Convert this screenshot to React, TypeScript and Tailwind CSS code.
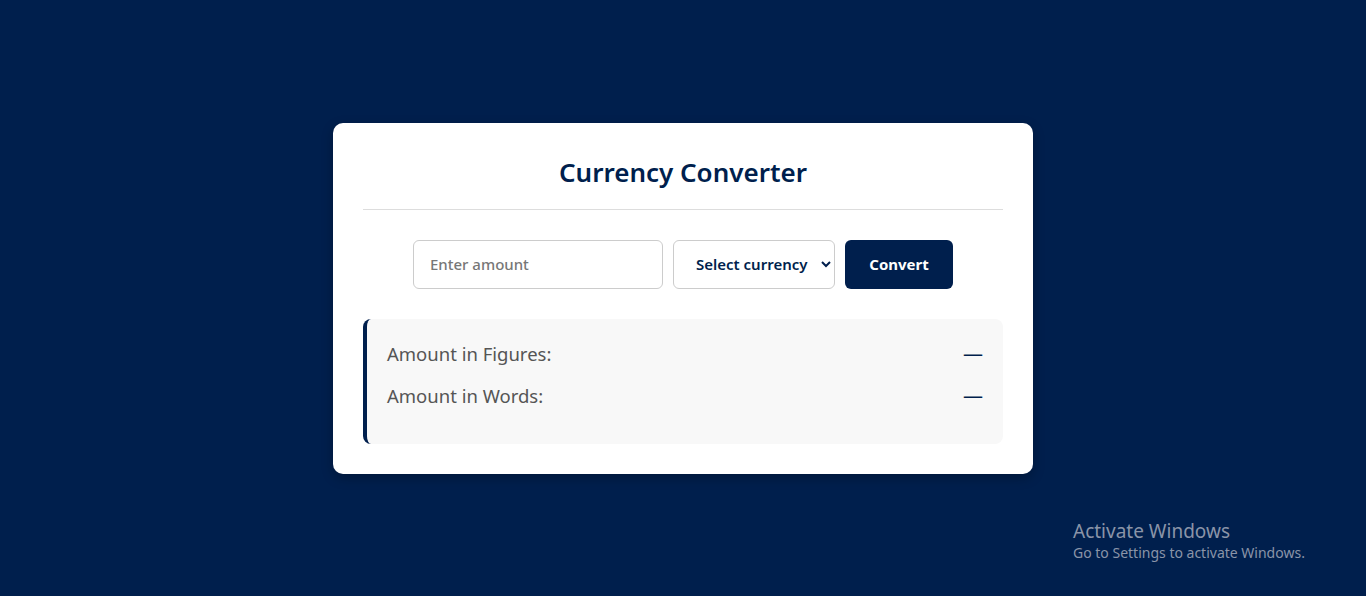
export default function App() {
  return (
    <div className="relative flex min-h-[596px] w-full items-center justify-center bg-[#001f4d] font-['Noto_Sans','Open_Sans',sans-serif]">
      <div className="w-[700px] rounded-[10px] bg-white p-[30px] shadow-[0_4px_12px_rgba(0,0,0,0.25)]">
        <h1 className="border-b border-[#dddddd] pb-[17px] text-center text-[26px] leading-[39px] font-semibold text-[#001f4d]">
          Currency Converter
        </h1>

        <div className="mt-[30px] flex items-center justify-center gap-[10px]">
          <input
            type="text"
            placeholder="Enter amount"
            className="h-[49px] w-[250px] rounded-[6px] border border-[#cccccc] px-[16px] text-[15px] font-medium text-[#001f4d] outline-none placeholder:text-[#777777]"
          />
          <select
            defaultValue=""
            className="h-[49px] w-[162px] rounded-[6px] border border-[#cccccc] bg-white pl-[18px] pr-[4px] text-[15px] font-semibold text-[#001f4d] outline-none"
          >
            <option value="">Select currency</option>
            <option value="USD">USD</option>
            <option value="EUR">EUR</option>
            <option value="GBP">GBP</option>
          </select>
          <button className="h-[49px] w-[108px] rounded-[6px] bg-[#001f4d] text-[15px] font-bold text-white">
            Convert
          </button>
        </div>

        <div className="mt-[30px] rounded-[8px] border-l-4 border-[#001f4d] bg-[#f8f8f8] px-[20px] pt-[21px] pb-[20px]">
          <div className="mb-[14px] flex items-center justify-between text-[18.5px] leading-[28px] text-[#555555]">
            <span>Amount in Figures:</span>
            <span className="text-[20px] text-[#001f4d]">—</span>
          </div>
          <div className="mb-[14px] flex items-center justify-between text-[18.5px] leading-[28px] text-[#555555]">
            <span>Amount in Words:</span>
            <span className="text-[20px] text-[#001f4d]">—</span>
          </div>
        </div>
      </div>

      <div className="absolute top-[518px] left-[1073px] text-[#8a94a8]">
        <div className="text-[19px] leading-[26px]">Activate Windows</div>
        <div className="text-[14px] leading-[18px]">Go to Settings to activate Windows.</div>
      </div>
    </div>
  );
}
